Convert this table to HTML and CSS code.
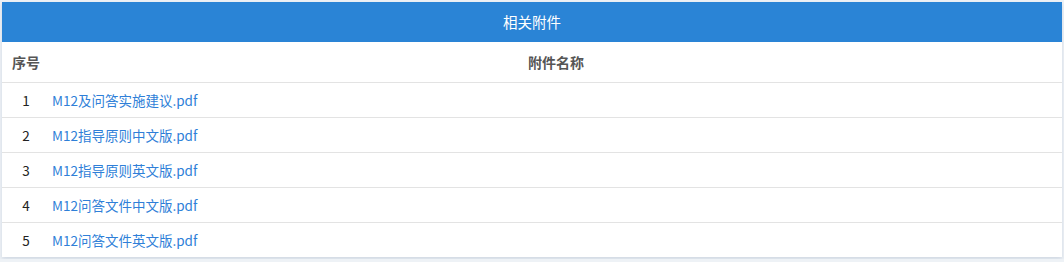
FILE: index.html
```html
<!DOCTYPE html>
<html lang="zh">
<head>
<meta charset="utf-8">
<link rel="stylesheet" href="styles.css">
</head>
<body>
<div class="panel">
  <div class="title">相关附件</div>
  <div class="row head">
    <div class="c-no">序号</div>
    <div class="c-name">附件名称</div>
  </div>
  <div class="row">
    <div class="c-no">1</div>
    <div class="c-name"><a href="#">M12及问答实施建议.pdf</a></div>
  </div>
  <div class="row">
    <div class="c-no">2</div>
    <div class="c-name"><a href="#">M12指导原则中文版.pdf</a></div>
  </div>
  <div class="row">
    <div class="c-no">3</div>
    <div class="c-name"><a href="#">M12指导原则英文版.pdf</a></div>
  </div>
  <div class="row">
    <div class="c-no">4</div>
    <div class="c-name"><a href="#">M12问答文件中文版.pdf</a></div>
  </div>
  <div class="row">
    <div class="c-no">5</div>
    <div class="c-name"><a href="#">M12问答文件英文版.pdf</a></div>
  </div>
</div>
</body>
</html>
```
FILE: styles.css
```css
html, body {
  margin: 0;
  padding: 0;
}
*, *::before, *::after {
  box-sizing: border-box;
}
body {
  background: #eef2f6;
  font-family: "Noto Sans CJK SC", "Noto Sans", sans-serif;
  font-size: 13.5px;
  color: #222;
  padding: 2px;
}
.panel {
  width: 1060px;
  background: #fff;
  box-shadow: 0 2px 4px rgba(120, 140, 170, 0.25);
}
.title {
  height: 40px;
  line-height: 40px;
  background: #2a84d6;
  color: #fff;
  text-align: center;
  font-size: 14.5px;
}
.row {
  display: grid;
  grid-template-columns: 48px 1fr;
  height: 35px;
  align-items: center;
  border-top: 1px solid #e3e3e3;
}
.row.head {
  height: 40px;
  border-top: none;
  font-weight: bold;
  font-size: 14px;
  color: #555;
}
.c-no {
  text-align: center;
}
.head .c-no {
  text-align: left;
  padding-left: 10px;
}
.c-name {
  padding-left: 2px;
}
.head .c-name {
  text-align: center;
  padding-left: 0;
}
.c-name a {
  color: #2f7fd8;
  text-decoration: none;
}
```
